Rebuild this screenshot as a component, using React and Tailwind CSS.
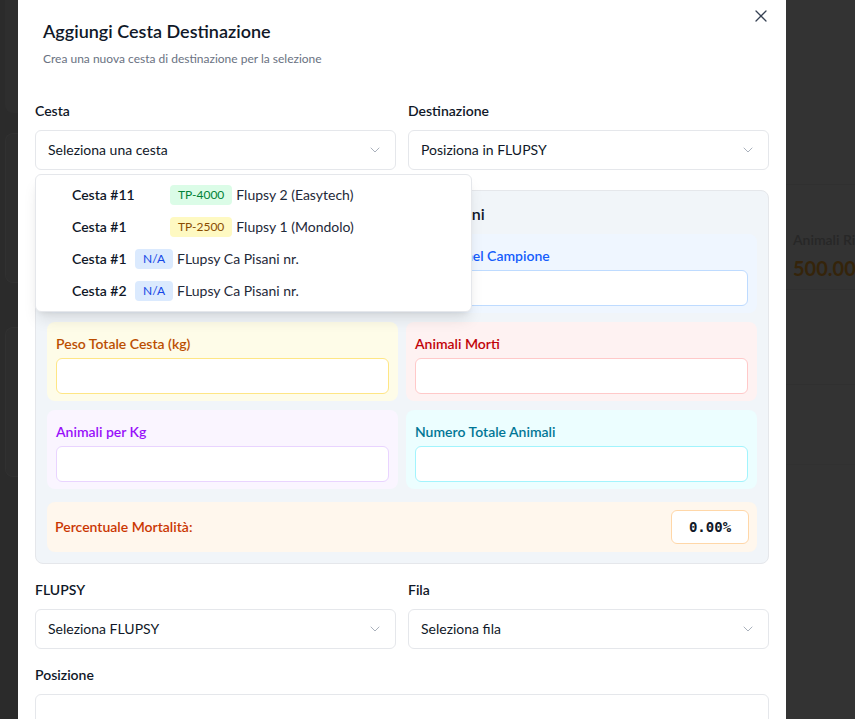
import React from 'react';
import { ChevronDown, X } from 'lucide-react';

const cestaOptions = [
  { name: 'Cesta #11', badge: 'TP-4000', badgeClass: 'bg-green-100 text-green-700', flupsy: 'Flupsy 2 (Easytech)', wide: true },
  { name: 'Cesta #1', badge: 'TP-2500', badgeClass: 'bg-yellow-100 text-yellow-800', flupsy: 'Flupsy 1 (Mondolo)', wide: true },
  { name: 'Cesta #1', badge: 'N/A', badgeClass: 'bg-blue-100 text-blue-700', flupsy: 'FLupsy Ca Pisani nr.', wide: false },
  { name: 'Cesta #2', badge: 'N/A', badgeClass: 'bg-blue-100 text-blue-700', flupsy: 'FLupsy Ca Pisani nr.', wide: false },
];

const FieldLabel = ({ children }) => (
  <div className="mb-[9px] text-sm font-semibold leading-5 text-gray-900">{children}</div>
);

const SelectBox = ({ value }) => (
  <div className="flex h-10 items-center justify-between rounded-md border border-gray-200 bg-white px-3 text-sm text-gray-900">
    <span>{value}</span>
    <ChevronDown className="h-4 w-4 text-gray-400" strokeWidth={1.25} />
  </div>
);

const MeasureCard = ({ label, bg, labelColor, inputBorder }) => (
  <div className={`rounded-lg px-[9px] pb-[7px] pt-3 ${bg}`}>
    <div className={`mb-1 text-sm font-semibold leading-5 ${labelColor}`}>{label}</div>
    <div className={`h-9 rounded-md border bg-white ${inputBorder}`} />
  </div>
);

export default function App() {
  return (
    <div className="flex h-[719px] w-[855px] overflow-hidden bg-[#333333] font-['Lato',sans-serif]">
      {/* dimmed page on the left */}
      <div className="flex w-[18px] shrink-0 flex-col gap-5 bg-[#2b2b2b] pl-[5px]">
        <div className="h-[113px] rounded-bl-lg bg-[#2e2e2e]" />
        <div className="h-[150px] rounded-l-lg border border-r-0 border-[#313131] bg-[#2d2d2d]" />
        <div className="mt-6 h-[150px] rounded-l-lg border border-r-0 border-[#313131] bg-[#2d2d2d]" />
      </div>

      {/* modal */}
      <div className="relative w-[768px] shrink-0 bg-white px-[17px]">
        <button className="absolute right-[15px] top-[6px] text-gray-700">
          <X className="h-5 w-5" strokeWidth={1.5} />
        </button>

        <div className="pl-2 pt-[17px]">
          <h2 className="text-lg font-semibold leading-7 text-gray-900">Aggiungi Cesta Destinazione</h2>
          <p className="mt-1.5 text-xs leading-4 text-gray-500">Crea una nuova cesta di destinazione per la selezione</p>
        </div>

        <div className="mt-[34px] grid grid-cols-2 gap-3">
          <div className="relative">
            <FieldLabel>Cesta</FieldLabel>
            <SelectBox value="Seleziona una cesta" />
            <div className="absolute left-0 top-[73px] z-10 w-[437px] rounded-md border border-gray-200 bg-white py-1 shadow-lg">
              {cestaOptions.map((opt, idx) => (
                <div key={idx} className="flex h-8 items-center whitespace-nowrap pl-9 text-sm">
                  <span className={`shrink-0 font-semibold text-gray-900 ${opt.wide ? 'w-[90px]' : 'w-[55px]'}`}>{opt.name}</span>
                  <span className={`ml-2 mr-1 rounded px-2 text-xs leading-5 ${opt.badgeClass}`}>{opt.badge}</span>
                  <span className="text-gray-800">{opt.flupsy}</span>
                </div>
              ))}
            </div>
          </div>
          <div>
            <FieldLabel>Destinazione</FieldLabel>
            <SelectBox value="Posiziona in FLUPSY" />
          </div>
        </div>

        {/* misurazioni */}
        <div className="mt-5 rounded-lg border border-gray-200 bg-slate-100 p-[11px]">
          <h3 className="mb-2 whitespace-nowrap text-base font-semibold leading-6 text-gray-900">
            Inserimento Dati di Campionamento e Calcolo per Misurazioni
          </h3>
          <div className="grid grid-cols-2 gap-x-2 gap-y-[9px]">
            <MeasureCard label="Peso Campione (g)" bg="bg-blue-50" labelColor="text-blue-600" inputBorder="border-blue-200" />
            <MeasureCard label="Animali nel Campione" bg="bg-blue-50" labelColor="text-blue-600" inputBorder="border-blue-200" />
            <MeasureCard label="Peso Totale Cesta (kg)" bg="bg-yellow-50" labelColor="text-amber-700" inputBorder="border-amber-200" />
            <MeasureCard label="Animali Morti" bg="bg-red-50" labelColor="text-red-700" inputBorder="border-red-200" />
            <MeasureCard label="Animali per Kg" bg="bg-purple-50" labelColor="text-purple-600" inputBorder="border-purple-200" />
            <MeasureCard label="Numero Totale Animali" bg="bg-cyan-50" labelColor="text-cyan-700" inputBorder="border-cyan-200" />
          </div>
          <div className="mt-[13px] flex items-center justify-between rounded-lg bg-orange-50 px-2 py-2">
            <span className="text-sm font-semibold text-orange-700">Percentuale Mortalità:</span>
            <div className="flex h-[34px] w-[78px] items-center justify-center rounded-md border border-orange-200 bg-white font-['DejaVu_Sans_Mono',monospace] text-sm font-bold text-gray-900">
              0.00%
            </div>
          </div>
        </div>

        <div className="mt-4 grid grid-cols-2 gap-3">
          <div>
            <FieldLabel>FLUPSY</FieldLabel>
            <SelectBox value="Seleziona FLUPSY" />
          </div>
          <div>
            <FieldLabel>Fila</FieldLabel>
            <SelectBox value="Seleziona fila" />
          </div>
        </div>

        <div className="mt-4">
          <FieldLabel>Posizione</FieldLabel>
          <div className="h-10 rounded-md border border-gray-200 bg-white" />
        </div>
      </div>

      {/* dimmed page on the right */}
      <div className="flex min-w-0 flex-1 flex-col overflow-hidden">
        <div className="h-[185px] border-b border-[#303030]" />
        <div className="h-[105px] border-b border-[#303030] pl-[7px] pt-[45px]">
          <div className="whitespace-nowrap text-sm font-semibold text-[#272727]">Animali Ri</div>
          <div className="mt-1 whitespace-nowrap text-xl font-bold text-[#35240a]">500.00</div>
        </div>
        <div className="h-[95px] border-b border-[#303030]" />
        <div className="h-[80px] border-b border-[#313131]" />
      </div>
    </div>
  );
}
